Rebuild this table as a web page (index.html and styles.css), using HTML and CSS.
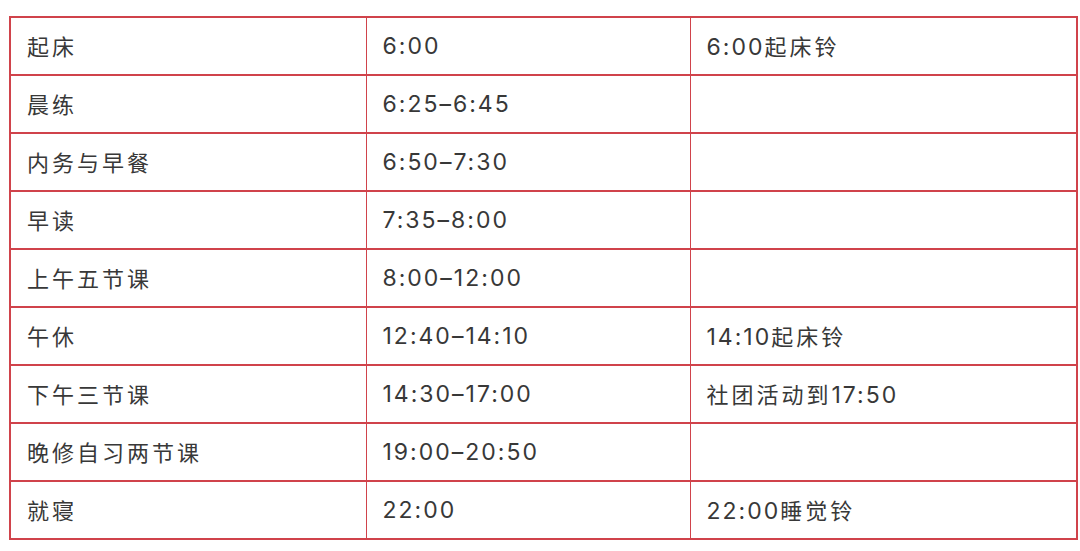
FILE: index.html
```html
<!DOCTYPE html>
<html lang="zh-CN">
<head>
<meta charset="utf-8">
<link rel="stylesheet" href="styles.css">
</head>
<body>
<table class="schedule">
  <colgroup>
    <col class="c1"><col class="c2"><col class="c3">
  </colgroup>
  <tbody>
    <tr><td><span class="zh">起床</span></td><td>6:00</td><td>6:00<span class="zh">起床铃</span></td></tr>
    <tr><td><span class="zh">晨练</span></td><td>6:25–6:45</td><td></td></tr>
    <tr><td><span class="zh">内务与早餐</span></td><td>6:50–7:30</td><td></td></tr>
    <tr><td><span class="zh">早读</span></td><td>7:35–8:00</td><td></td></tr>
    <tr><td><span class="zh">上午五节课</span></td><td>8:00–12:00</td><td></td></tr>
    <tr><td><span class="zh">午休</span></td><td>12:40–14:10</td><td>14:10<span class="zh">起床铃</span></td></tr>
    <tr><td><span class="zh">下午三节课</span></td><td>14:30–17:00</td><td><span class="zh">社团活动到</span>17:50</td></tr>
    <tr><td><span class="zh">晚修自习两节课</span></td><td>19:00–20:50</td><td></td></tr>
    <tr><td><span class="zh">就寝</span></td><td>22:00</td><td>22:00<span class="zh">睡觉铃</span></td></tr>
  </tbody>
</table>
</body>
</html>
```
FILE: styles.css
```css
html, body {
  margin: 0;
  padding: 0;
  background: #ffffff;
}
body {
  padding: 16px 0 0 9px;
}
.schedule {
  border-collapse: collapse;
  border: 2px solid #d0434b;
  width: 1067px;
  table-layout: fixed;
  font-family: Inter, "Noto Sans CJK SC", sans-serif;
  font-size: 23px;
  letter-spacing: 2px;
  color: #383838;
}
.c1 { width: 356px; }
.c2 { width: 324px; }
.c3 { width: 387px; }
.schedule tr {
  height: 58px;
}
.schedule td {
  border-left: 1px solid #d0434b;
  border-right: 1px solid #d0434b;
  border-top: 2px solid #d0434b;
  border-bottom: 2px solid #d0434b;
  padding: 0 0 0 16px;
  vertical-align: middle;
  white-space: nowrap;
  line-height: 28px;
}
.zh {
  font-family: "Noto Sans CJK SC", sans-serif;
  font-size: 22px;
  letter-spacing: 3px;
}
```
